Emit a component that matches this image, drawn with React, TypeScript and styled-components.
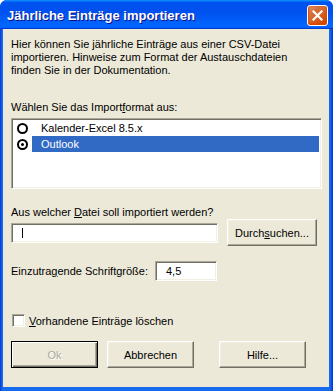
import React from "react"
import styled, { createGlobalStyle } from "styled-components"

const GlobalStyle = createGlobalStyle`
  html, body {
    margin: 0;
    padding: 0;
    background: #ffffff;
  }
  body {
    font-family: "Liberation Sans", Arial, sans-serif;
    font-size: 11px;
    color: #000;
  }
`

const sunken = `
  border: 1px solid;
  border-color: #aca899 #ffffff #ffffff #aca899;
  box-shadow: inset 1px 1px 0 #716f64, inset -1px -1px 0 #f1efe2;
  background: #ffffff;
`

const formats = [
  { label: "Kalender-Excel 8.5.x", selected: false },
  { label: "Outlook", selected: true },
]

export default function App() {
  return (
    <>
      <GlobalStyle />
      <S.Window>
        <S.TitleBar>
          <S.Title>Jährliche Einträge importieren</S.Title>
          <S.CloseButton aria-label="Schließen">
            <svg width="11" height="11" viewBox="0 0 11 11">
              <path d="M1.5 1.5 L9.5 9.5 M9.5 1.5 L1.5 9.5" stroke="#fff" strokeWidth="2.2" strokeLinecap="square" />
            </svg>
          </S.CloseButton>
        </S.TitleBar>
        <S.Frame>
          <S.Body>
            <S.Intro>
              Hier können Sie jährliche Einträge aus einer CSV-Datei importieren. Hinweise zum Format der
              Austauschdateien finden Sie in der Dokumentation.
            </S.Intro>

            <S.Label $top={24}>
              Wählen Sie das Import<u>f</u>ormat aus:
            </S.Label>
            <S.ListBox>
              {formats.map((f) => (
                <S.ListRow key={f.label}>
                  <S.Radio $checked={f.selected} />
                  <S.ListItem $selected={f.selected}>{f.label}</S.ListItem>
                </S.ListRow>
              ))}
            </S.ListBox>

            <S.Label $top={17}>
              Aus welcher <u>D</u>atei soll importiert werden?
            </S.Label>
            <S.FileRow>
              <S.TextField $width={207}>
                <S.Caret />
              </S.TextField>
              <S.Button $width={90}>
                Durch<u>s</u>uchen...
              </S.Button>
            </S.FileRow>

            <S.SizeRow>
              <S.SizeLabel>
                Einzutra<u>g</u>ende Schriftgröße:
              </S.SizeLabel>
              <S.TextField $width={62}>
                <S.FieldValue>4,5</S.FieldValue>
              </S.TextField>
            </S.SizeRow>

            <S.CheckRow>
              <S.CheckBox />
              <span>
                <u>V</u>orhandene Einträge löschen
              </span>
            </S.CheckRow>

            <S.ButtonRow>
              <S.Button $width={87} $default $disabled>
                Ok
              </S.Button>
              <S.Button $width={87}>Abbrechen</S.Button>
              <S.Button $width={87} $gap={25}>
                Hilfe...
              </S.Button>
            </S.ButtonRow>
          </S.Body>
        </S.Frame>
      </S.Window>
    </>
  )
}

const S = {
  Window: styled.div`
    width: 333px;
    height: 391px;
    display: flex;
    flex-direction: column;
    border-radius: 7px 7px 0 0;
    overflow: hidden;
    background: #0831d9;
  `,
  TitleBar: styled.div`
    height: 29px;
    flex: none;
    display: flex;
    align-items: center;
    justify-content: space-between;
    padding: 0 5px 0 7px;
    box-sizing: border-box;
    background: linear-gradient(
      180deg,
      #0997ff 0%,
      #0053ee 8%,
      #0050ee 40%,
      #0066ff 88%,
      #0066ff 93%,
      #005bff 95%,
      #003dd7 96%,
      #003dd7 100%
    );
  `,
  Title: styled.div`
    color: #fff;
    font-family: "Liberation Sans", Arial, sans-serif;
    font-weight: bold;
    font-size: 13px;
    text-shadow: 1px 1px 0 #0f1089;
    padding-top: 1px;
  `,
  CloseButton: styled.div`
    width: 21px;
    height: 21px;
    box-sizing: border-box;
    border: 1px solid #fff;
    border-radius: 3px;
    display: flex;
    align-items: center;
    justify-content: center;
    background: radial-gradient(circle at 90% 90%, #cc4600 0%, #dc6527 55%, #cd7546 70%, #e98a5c 90%);
    box-shadow: inset 0 -1px 2px 1px #da4600;
    margin-top: 1px;
  `,
  Frame: styled.div`
    flex: 1;
    display: flex;
    padding: 0 4px 4px 3px;
    background: linear-gradient(90deg, #0831d9 0px, #166aee 2px, #166aee calc(100% - 3px), #0831d9 100%);
  `,
  Body: styled.div`
    flex: 1;
    background: #ece9d8;
    padding: 9px 7px 0 8px;
    display: flex;
    flex-direction: column;
  `,
  Intro: styled.p`
    margin: 0;
    line-height: 13px;
    padding-right: 8px;
  `,
  Label: styled.div<{ $top: number }>`
    margin-top: ${(p) => p.$top}px;
    line-height: 13px;
  `,
  ListBox: styled.div`
    ${sunken}
    margin-top: 4px;
    height: 71px;
    width: 311px;
    box-sizing: border-box;
    padding: 1px 2px 0 2px;
  `,
  ListRow: styled.div`
    display: flex;
    align-items: center;
    height: 16px;
  `,
  Radio: styled.span<{ $checked: boolean }>`
    width: 11px;
    height: 11px;
    box-sizing: border-box;
    border: 2px solid #000;
    border-radius: 50%;
    margin: 0 4px 0 3px;
    flex: none;
    position: relative;
    &::after {
      content: "";
      display: ${(p) => (p.$checked ? "block" : "none")};
      position: absolute;
      left: 2px;
      top: 2px;
      width: 3px;
      height: 3px;
      border-radius: 50%;
      background: #000;
    }
  `,
  ListItem: styled.div<{ $selected: boolean }>`
    flex: 1;
    height: 16px;
    line-height: 16px;
    padding-left: 9px;
    background: ${(p) => (p.$selected ? "#316ac5" : "transparent")};
    color: ${(p) => (p.$selected ? "#fff" : "#000")};
  `,
  FileRow: styled.div`
    display: flex;
    align-items: center;
    gap: 9px;
    height: 27px;
  `,
  TextField: styled.div<{ $width: number }>`
    ${sunken}
    width: ${(p) => p.$width}px;
    height: 20px;
    box-sizing: border-box;
    display: flex;
    align-items: center;
    flex: none;
  `,
  Caret: styled.span`
    width: 1px;
    height: 10px;
    background: #000;
    margin-left: 10px;
  `,
  FieldValue: styled.span`
    padding-left: 10px;
  `,
  SizeRow: styled.div`
    display: flex;
    align-items: center;
    margin-top: 15px;
  `,
  SizeLabel: styled.span`
    width: 144px;
  `,
  CheckRow: styled.label`
    display: flex;
    align-items: center;
    margin-top: 33px;
    height: 13px;
    padding-left: 1px;
  `,
  CheckBox: styled.span`
    ${sunken}
    width: 13px;
    height: 13px;
    box-sizing: border-box;
    margin-right: 4px;
  `,
  ButtonRow: styled.div`
    display: flex;
    margin-top: 14px;
    gap: 9px;
  `,
  Button: styled.div<{ $width: number; $default?: boolean; $disabled?: boolean; $gap?: number }>`
    width: ${(p) => p.$width}px;
    height: 27px;
    box-sizing: border-box;
    flex: none;
    display: flex;
    align-items: center;
    justify-content: center;
    background: #ece9d8;
    border: 1px solid;
    border-color: ${(p) => (p.$default ? "#000" : "#fff #716f64 #716f64 #fff")};
    box-shadow: ${(p) =>
      p.$default
        ? "inset 1px 1px 0 #fff, inset -1px -1px 0 #716f64, inset -2px -2px 0 #aca899"
        : "inset -1px -1px 0 #aca899, inset 1px 1px 0 #f1efe2"};
    color: ${(p) => (p.$disabled ? "#aca899" : "#000")};
    text-shadow: ${(p) => (p.$disabled ? "1px 1px 0 #fff" : "none")};
    margin-left: ${(p) => (p.$gap ? p.$gap - 9 : 0)}px;
  `,
}
